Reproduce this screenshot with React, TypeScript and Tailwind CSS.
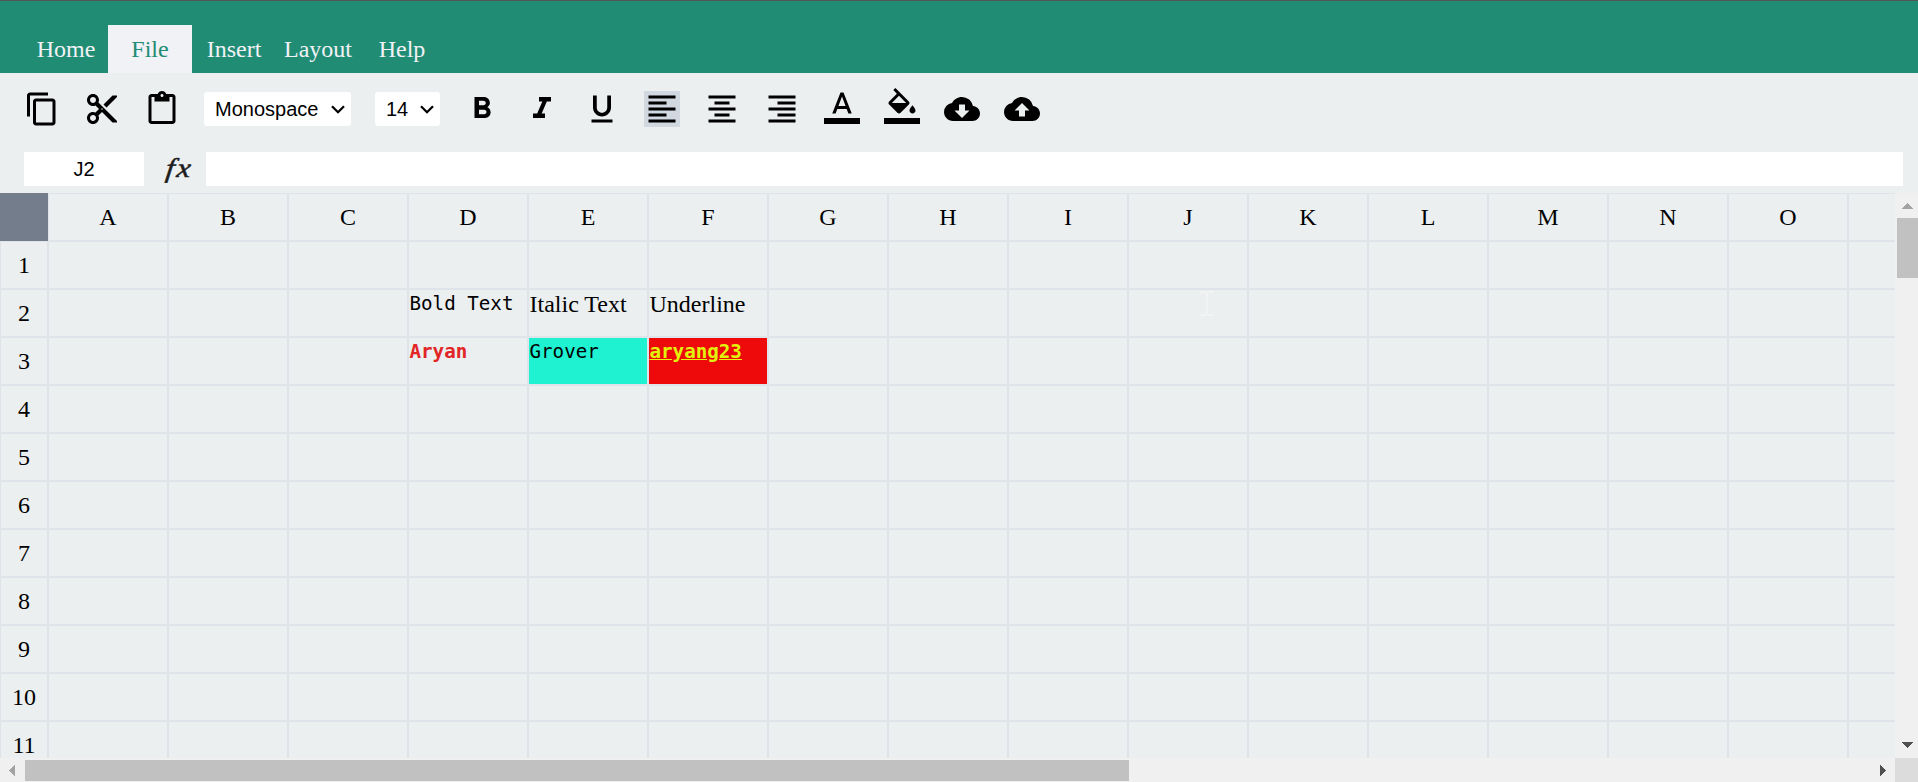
import React from "react";
import {
  MdContentCopy,
  MdContentCut,
  MdContentPaste,
  MdFormatBold,
  MdFormatItalic,
  MdFormatUnderlined,
  MdFormatAlignLeft,
  MdFormatAlignCenter,
  MdFormatAlignRight,
  MdCloudDownload,
  MdCloudUpload,
} from "react-icons/md";

const TABS = ["Home", "File", "Insert", "Layout", "Help"];
const COLUMNS = [..."ABCDEFGHIJKLMNO".split(""), ""];
const ROWS = Array.from({ length: 11 }, (_, i) => i + 1);

const MONO = "font-['DejaVu_Sans_Mono',monospace] text-[19.2px] leading-[22px] pt-[3px]";

const CELLS: Record<string, { text: string; className: string }> = {
  D2: { text: "Bold Text", className: MONO },
  E2: { text: "Italic Text", className: "leading-[28px]" },
  F2: { text: "Underline", className: "leading-[28px]" },
  D3: { text: "Aryan", className: `${MONO} font-bold text-[#e22626]` },
  E3: { text: "Grover", className: `${MONO} bg-[#1ef2d0]` },
  F3: { text: "aryang23", className: `${MONO} font-bold underline bg-[#ee0a0a] text-[#e1f20c]` },
};

function Tool({ children, active = false }: { children: React.ReactNode; active?: boolean }) {
  return (
    <button className={`h-9 w-9 shrink-0 text-4xl text-black ${active ? "bg-[#d1d8e0]" : ""}`}>
      {children}
    </button>
  );
}

function ColorTool({ d }: { d: string }) {
  return (
    <svg viewBox="0 0 24 24" className="mb-1.5 h-9 w-9 shrink-0">
      <path d={d} />
      <path d="M0 20h24v4H0z" />
    </svg>
  );
}

function Select({ value, className }: { value: string; className: string }) {
  return (
    <div
      className={`flex h-[34px] shrink-0 items-center justify-between rounded-[3px] bg-white font-['Liberation_Sans',sans-serif] text-[20px] text-black ${className}`}
    >
      <span>{value}</span>
      <svg viewBox="0 0 14 9" className="h-[9px] w-[14px]" fill="none" stroke="black" strokeWidth="2.3">
        <path d="M1 1.2l6 6 6-6" />
      </svg>
    </div>
  );
}

export default function App() {
  return (
    <div className="flex h-[782px] w-full flex-col overflow-hidden bg-[#ebeff0] font-['Liberation_Serif',serif] text-[24px] text-black">
      <nav className="flex h-[73px] shrink-0 items-end border-t border-[#555] bg-[#218c74] pl-6">
        {TABS.map((tab) => (
          <div
            key={tab}
            className={`flex h-12 w-[84px] items-center justify-center ${
              tab === "File" ? "bg-[#f1f2f6] text-[#218c74]" : "text-[#f1f2f6]"
            }`}
          >
            {tab}
          </div>
        ))}
      </nav>

      <div className="flex h-[72px] shrink-0 items-center gap-6 pl-6">
        <Tool><MdContentCopy /></Tool>
        <Tool><MdContentCut /></Tool>
        <Tool><MdContentPaste /></Tool>
        <Select value="Monospace" className="w-[147px] pl-[11px] pr-1.5" />
        <Select value="14" className="w-[65px] pl-[11px] pr-1.5" />
        <Tool><MdFormatBold /></Tool>
        <Tool><MdFormatItalic /></Tool>
        <Tool><MdFormatUnderlined /></Tool>
        <Tool active><MdFormatAlignLeft /></Tool>
        <Tool><MdFormatAlignCenter /></Tool>
        <Tool><MdFormatAlignRight /></Tool>
        <ColorTool d="M11 3L5.5 17h2.25l1.12-3h6.25l1.12 3h2.25L13 3h-2zm-1.38 9L12 5.67 14.38 12H9.62z" />
        <ColorTool d="M16.56 8.94L7.62 0 6.21 1.41l2.38 2.38-5.15 5.15c-.59.59-.59 1.54 0 2.12l5.5 5.5c.29.29.68.44 1.06.44s.77-.15 1.06-.44l5.5-5.5c.59-.58.59-1.53 0-2.12zM5.21 10L10 5.21 14.79 10H5.21zM19 11.5s-2 2.17-2 3.5c0 1.1.9 2 2 2s2-.9 2-2c0-1.33-2-3.5-2-3.5z" />
        <Tool><MdCloudDownload /></Tool>
        <Tool><MdCloudUpload /></Tool>
      </div>

      <div className="flex h-12 shrink-0 items-center pl-6 pr-[15px]">
        <div className="flex h-[34px] w-[120px] items-center justify-center bg-white font-['Liberation_Sans',sans-serif] text-[20px]">
          J2
        </div>
        <div className="w-[62px] pl-[22px]">
          <div className="w-7 origin-left -skew-x-6 scale-x-115 pb-0.5 text-[27px] italic leading-none tracking-[2px] text-[#1c1c1c] [-webkit-text-stroke:0.5px_#1c1c1c]">
            fx
          </div>
        </div>
        <div className="h-[34px] flex-1 bg-white" />
      </div>

      <div className="flex h-[565px] shrink-0">
        <div className="relative w-[1895px] shrink-0 overflow-hidden">
          <div className="flex">
            <div className="h-12 w-12 shrink-0 bg-[#747d8c]" />
            {COLUMNS.map((c) => (
              <div key={c} className="flex h-12 w-[120px] shrink-0 items-center justify-center border border-[#dfe4ea]">
                {c}
              </div>
            ))}
          </div>
          {ROWS.map((r) => (
            <div key={r} className="flex">
              <div className="flex h-12 w-12 shrink-0 items-center justify-center border border-[#dfe4ea]">{r}</div>
              {COLUMNS.map((c) => {
                const cell = CELLS[c + r];
                return (
                  <div
                    key={c}
                    className={`h-12 w-[120px] shrink-0 whitespace-nowrap border border-[#dfe4ea] pl-[0.5px] ${cell ? cell.className : ""}`}
                  >
                    {cell?.text}
                  </div>
                );
              })}
            </div>
          ))}
          <svg className="absolute left-[1200px] top-[98px] h-[25px] w-[14px]" fill="#f2f3f5" shapeRendering="crispEdges">
            <path d="M0 0h6v2H0zM8 0h6v2H8zM6 1h2v23H6zM0 23h6v2H0zM8 23h6v2H8z" />
          </svg>
        </div>
        <div className="flex flex-1 flex-col bg-[#f0f0f0] pl-0.5">
          <svg className="h-[25px] w-[21px] shrink-0" fill="#a3a3a3" shapeRendering="crispEdges">
            <path d="M5 16l5.500-6 5.500 6z" />
          </svg>
          <div className="h-[60px] bg-[#c1c1c1]" />
          <svg className="mt-auto h-[25px] w-[21px] shrink-0" fill="#505050" shapeRendering="crispEdges">
            <path d="M5 9l5.500 6 5.500-6z" />
          </svg>
        </div>
      </div>

      <div className="flex h-6 shrink-0 bg-[#f0f0f0]">
        <svg className="h-6 w-[25px] shrink-0" fill="#a3a3a3" shapeRendering="crispEdges">
          <path d="M15 7l-6 5.500 6 5.500z" />
        </svg>
        <div className="mb-px mt-0.5 w-[1104px] bg-[#c1c1c1]" />
        <svg className="ml-auto h-6 w-[25px] shrink-0" fill="#505050" shapeRendering="crispEdges">
          <path d="M10 7l6 5.500-6 5.500z" />
        </svg>
        <div className="w-[23px] bg-[#dcdcdc]" />
      </div>
    </div>
  );
}
